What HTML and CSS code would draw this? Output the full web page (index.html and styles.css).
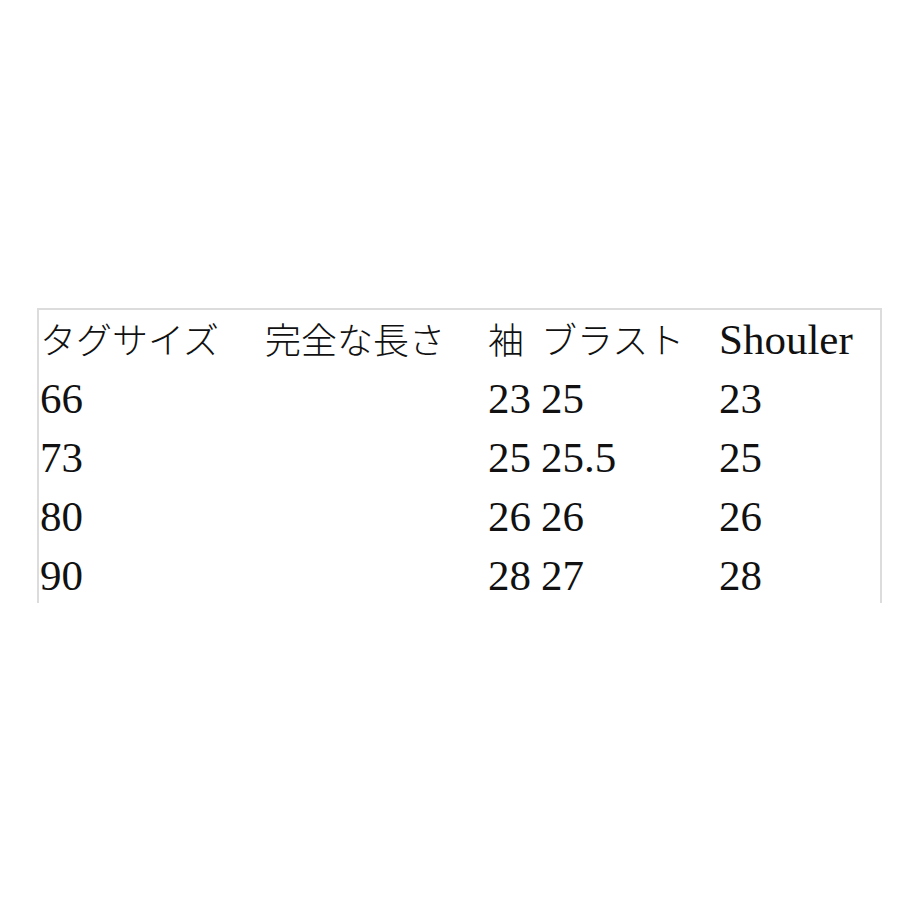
FILE: index.html
```html
<!DOCTYPE html>
<html lang="ja">
<head>
<meta charset="utf-8">
<title>サイズ表</title>
<link rel="stylesheet" href="styles.css">
</head>
<body>
<div class="page">
  <div class="sheet">
    <div class="row">
      <div class="cell"><span class="ja">タグサイズ</span></div>
      <div class="cell"><span class="ja">完全な長さ</span></div>
      <div class="cell"><span class="ja">袖</span></div>
      <div class="cell"><span class="ja">ブラスト</span></div>
      <div class="cell">Shouler</div>
    </div>
    <div class="row">
      <div class="cell">66</div>
      <div class="cell"></div>
      <div class="cell">23</div>
      <div class="cell">25</div>
      <div class="cell">23</div>
    </div>
    <div class="row">
      <div class="cell">73</div>
      <div class="cell"></div>
      <div class="cell">25</div>
      <div class="cell">25.5</div>
      <div class="cell">25</div>
    </div>
    <div class="row">
      <div class="cell">80</div>
      <div class="cell"></div>
      <div class="cell">26</div>
      <div class="cell">26</div>
      <div class="cell">26</div>
    </div>
    <div class="row">
      <div class="cell">90</div>
      <div class="cell"></div>
      <div class="cell">28</div>
      <div class="cell">27</div>
      <div class="cell">28</div>
    </div>
  </div>
</div>
</body>
</html>
```
FILE: styles.css
```css
html, body {
  margin: 0;
  padding: 0;
  background: #ffffff;
}

.page {
  width: 920px;
  height: 920px;
  box-sizing: border-box;
  padding: 308px 0 0 37px;
}

.sheet {
  width: 845px;
  height: 295px;
  box-sizing: border-box;
  border: 2.5px solid #dcdcdc;
  border-bottom: none;
  padding-left: 1px;
  overflow: hidden;
  font-family: "Liberation Serif", "Noto Sans CJK JP", serif;
  font-size: 43px;
  line-height: 59px;
  color: #111111;
}

.row {
  display: grid;
  grid-template-columns: 225px 223px 53px 178px 1fr;
  height: 59px;
}

.cell {
  white-space: nowrap;
}

.ja {
  font-family: "Noto Sans CJK JP", sans-serif;
  font-size: 36px;
  font-weight: 300;
  line-height: 1;
}
```
